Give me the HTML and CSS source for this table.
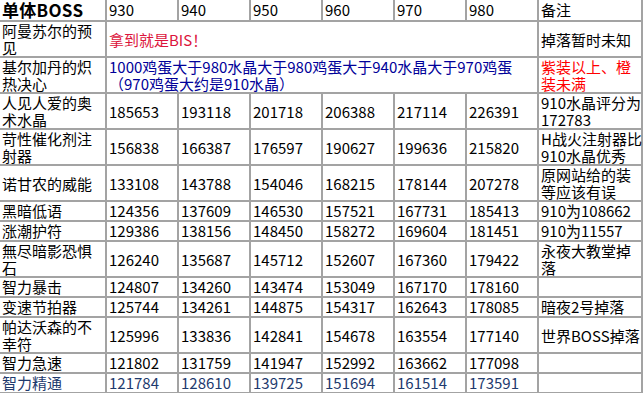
FILE: index.html
```html
<!DOCTYPE html>
<html lang="zh-CN">
<head>
<meta charset="utf-8">
<title>单体BOSS</title>
<link rel="stylesheet" href="styles.css">
</head>
<body>
<table class="grid">
  <colgroup>
    <col class="c-name">
    <col class="c-num"><col class="c-num"><col class="c-num">
    <col class="c-num"><col class="c-num"><col class="c-num">
    <col class="c-note">
  </colgroup>
  <tr class="head">
    <td class="title">单体BOSS</td>
    <td>930</td><td>940</td><td>950</td><td>960</td><td>970</td><td>980</td>
    <td>备注</td>
  </tr>
  <tr class="two">
    <td>阿曼苏尔的预<br>见</td>
    <td colspan="6" class="crimson">拿到就是BIS！</td>
    <td>掉落暂时未知</td>
  </tr>
  <tr class="two">
    <td>基尔加丹的炽<br>热决心</td>
    <td colspan="6" class="navy">1000鸡蛋大于980水晶大于980鸡蛋大于940水晶大于970鸡蛋<br>（970鸡蛋大约是910水晶）</td>
    <td class="red">紫装以上、橙<br>装未满</td>
  </tr>
  <tr class="two">
    <td>人见人爱的奥<br>术水晶</td>
    <td>185653</td><td>193118</td><td>201718</td><td>206388</td><td>217114</td><td>226391</td>
    <td>910水晶评分为<br>172783</td>
  </tr>
  <tr class="two">
    <td>苛性催化剂注<br>射器</td>
    <td>156838</td><td>166387</td><td>176597</td><td>190627</td><td>199636</td><td>215820</td>
    <td>H战火注射器比<br>910水晶优秀</td>
  </tr>
  <tr class="two">
    <td>诺甘农的威能</td>
    <td>133108</td><td>143788</td><td>154046</td><td>168215</td><td>178144</td><td>207278</td>
    <td>原网站给的装<br>等应该有误</td>
  </tr>
  <tr class="one">
    <td>黑暗低语</td>
    <td>124356</td><td>137609</td><td>146530</td><td>157521</td><td>167731</td><td>185413</td>
    <td>910为108662</td>
  </tr>
  <tr class="one">
    <td>涨潮护符</td>
    <td>129386</td><td>138156</td><td>148450</td><td>158272</td><td>169604</td><td>181451</td>
    <td>910为11557</td>
  </tr>
  <tr class="two">
    <td>無尽暗影恐惧<br>石</td>
    <td>126240</td><td>135687</td><td>145712</td><td>152607</td><td>167360</td><td>179422</td>
    <td>永夜大教堂掉<br>落</td>
  </tr>
  <tr class="one">
    <td>智力暴击</td>
    <td>124807</td><td>134260</td><td>143474</td><td>153049</td><td>167170</td><td>178160</td>
    <td></td>
  </tr>
  <tr class="one">
    <td>变速节拍器</td>
    <td>125744</td><td>134261</td><td>144875</td><td>154317</td><td>162643</td><td>178085</td>
    <td>暗夜2号掉落</td>
  </tr>
  <tr class="two">
    <td>帕达沃森的不<br>幸符</td>
    <td>125996</td><td>133836</td><td>142841</td><td>154678</td><td>163554</td><td>177140</td>
    <td>世界BOSS掉落</td>
  </tr>
  <tr class="one">
    <td>智力急速</td>
    <td>121802</td><td>131759</td><td>141947</td><td>152992</td><td>163662</td><td>177098</td>
    <td></td>
  </tr>
  <tr class="one slate">
    <td>智力精通</td>
    <td>121784</td><td>128610</td><td>139725</td><td>151694</td><td>161514</td><td>173591</td>
    <td></td>
  </tr>
</table>
</body>
</html>
```

FILE: styles.css
```css
html, body {
  margin: 0;
  padding: 0;
  background: #ffffff;
}

.grid {
  width: 643px;
  table-layout: fixed;
  border-collapse: separate;
  border-spacing: 0;
  font-family: "Noto Sans CJK SC", "Liberation Sans", sans-serif;
  font-size: 15px;
  line-height: 17px;
  color: #000000;
}

.c-name { width: 107px; }
.c-num { width: 72px; }
.c-note { width: 104px; }

.grid td {
  padding: 0 0 0 2px;
  border-right: 2px solid #a3a3a3;
  border-bottom: 2px solid #a3a3a3;
  vertical-align: middle;
  white-space: nowrap;
}

.grid tr.head td {
  height: 20px;
  line-height: 20px;
}

.grid tr.two td {
  height: 34px;
}

.grid tr.one td {
  height: 18px;
  line-height: 18px;
}

.grid td.title {
  font-weight: bold;
  font-size: 17px;
  letter-spacing: 0.3px;
}

.crimson { color: #dc143c; }
.navy { color: #000099; }
.red { color: #ff0000; }
.grid tr.slate td { color: #1e3a6e; }
```
